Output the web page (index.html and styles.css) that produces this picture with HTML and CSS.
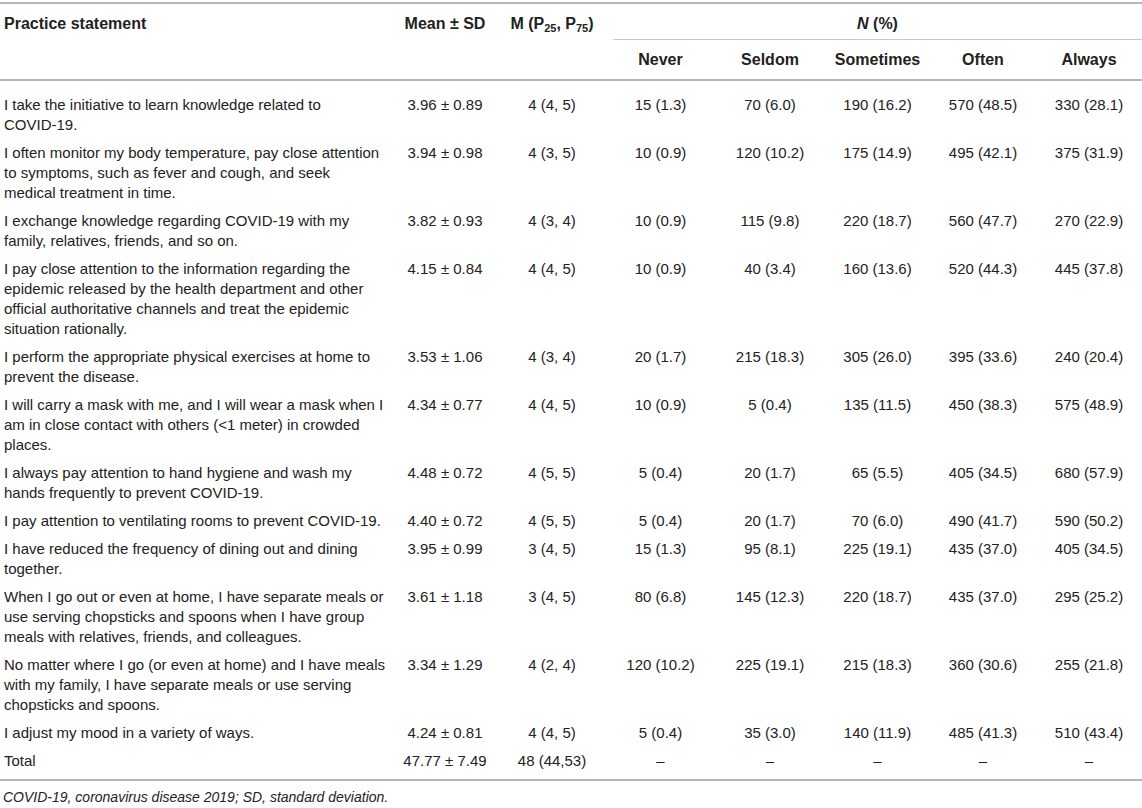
FILE: index.html
```html
<!DOCTYPE html>
<html lang="en">
<head>
<meta charset="utf-8">
<title>Practice statements</title>
<link rel="stylesheet" href="styles.css">
</head>
<body>
<div class="wrap">
<table class="data">
  <colgroup>
    <col class="c-stmt"><col class="c-mean"><col class="c-med"><col class="c-never"><col class="c-seldom"><col class="c-some"><col class="c-often"><col class="c-always">
  </colgroup>
  <thead class="hd">
    <tr class="hd-top">
      <th rowspan="2" class="left">Practice statement</th>
      <th rowspan="2">Mean ± SD</th>
      <th rowspan="2">M (P<sub>25</sub>, P<sub>75</sub>)</th>
      <th colspan="5" class="span-head"><div class="span-inner"><i>N</i> (%)</div></th>
    </tr>
    <tr class="hd-sub">
      <th>Never</th><th>Seldom</th><th>Sometimes</th><th>Often</th><th>Always</th>
    </tr>
  </thead>
  <tbody>
    <tr><td class="left">I take the initiative to learn knowledge related to <span class="nw">COVID-19.</span></td><td>3.96 ± 0.89</td><td>4 (4, 5)</td><td>15 (1.3)</td><td>70 (6.0)</td><td>190 (16.2)</td><td>570 (48.5)</td><td>330 (28.1)</td></tr>
    <tr><td class="left">I often monitor my body temperature, pay close attention to symptoms, such as fever and cough, and seek <span class="nw">medical treatment in time.</span></td><td>3.94 ± 0.98</td><td>4 (3, 5)</td><td>10 (0.9)</td><td>120 (10.2)</td><td>175 (14.9)</td><td>495 (42.1)</td><td>375 (31.9)</td></tr>
    <tr><td class="left">I exchange knowledge regarding COVID-19 with my family, relatives, friends, and so on.</td><td>3.82 ± 0.93</td><td>4 (3, 4)</td><td>10 (0.9)</td><td>115 (9.8)</td><td>220 (18.7)</td><td>560 (47.7)</td><td>270 (22.9)</td></tr>
    <tr><td class="left">I pay close attention to the information regarding the epidemic released by the health department and other official authoritative channels and treat the epidemic situation rationally.</td><td>4.15 ± 0.84</td><td>4 (4, 5)</td><td>10 (0.9)</td><td>40 (3.4)</td><td>160 (13.6)</td><td>520 (44.3)</td><td>445 (37.8)</td></tr>
    <tr><td class="left">I perform the appropriate physical exercises at home to prevent the disease.</td><td>3.53 ± 1.06</td><td>4 (3, 4)</td><td>20 (1.7)</td><td>215 (18.3)</td><td>305 (26.0)</td><td>395 (33.6)</td><td>240 (20.4)</td></tr>
    <tr><td class="left">I will carry a mask with me, and I will wear a mask when I am in close contact with others (&lt;1 meter) in crowded places.</td><td>4.34 ± 0.77</td><td>4 (4, 5)</td><td>10 (0.9)</td><td>5 (0.4)</td><td>135 (11.5)</td><td>450 (38.3)</td><td>575 (48.9)</td></tr>
    <tr><td class="left">I always pay attention to hand hygiene and wash my hands frequently to prevent COVID-19.</td><td>4.48 ± 0.72</td><td>4 (5, 5)</td><td>5 (0.4)</td><td>20 (1.7)</td><td>65 (5.5)</td><td>405 (34.5)</td><td>680 (57.9)</td></tr>
    <tr><td class="left">I pay attention to ventilating rooms to prevent COVID-19.</td><td>4.40 ± 0.72</td><td>4 (5, 5)</td><td>5 (0.4)</td><td>20 (1.7)</td><td>70 (6.0)</td><td>490 (41.7)</td><td>590 (50.2)</td></tr>
    <tr><td class="left">I have reduced the frequency of dining out and dining together.</td><td>3.95 ± 0.99</td><td>3 (4, 5)</td><td>15 (1.3)</td><td>95 (8.1)</td><td>225 (19.1)</td><td>435 (37.0)</td><td>405 (34.5)</td></tr>
    <tr><td class="left">When I go out or even at home, I have separate meals or use serving chopsticks and spoons when I have group meals with relatives, friends, and colleagues.</td><td>3.61 ± 1.18</td><td>3 (4, 5)</td><td>80 (6.8)</td><td>145 (12.3)</td><td>220 (18.7)</td><td>435 (37.0)</td><td>295 (25.2)</td></tr>
    <tr><td class="left">No matter where I go (or even at home) and I have meals with my family, I have separate meals or use serving chopsticks and spoons.</td><td>3.34 ± 1.29</td><td>4 (2, 4)</td><td>120 (10.2)</td><td>225 (19.1)</td><td>215 (18.3)</td><td>360 (30.6)</td><td>255 (21.8)</td></tr>
    <tr><td class="left">I adjust my mood in a variety of ways.</td><td>4.24 ± 0.81</td><td>4 (4, 5)</td><td>5 (0.4)</td><td>35 (3.0)</td><td>140 (11.9)</td><td>485 (41.3)</td><td>510 (43.4)</td></tr>
    <tr class="total"><td class="left">Total</td><td>47.77 ± 7.49</td><td>48 (44,53)</td><td>–</td><td>–</td><td>–</td><td>–</td><td>–</td></tr>
  </tbody>
</table>
<p class="note">COVID-19, coronavirus disease 2019; SD, standard deviation.</p>
</div>
</body>
</html>
```

FILE: styles.css
```css
html, body {
  margin: 0;
  padding: 0;
  background: #ffffff;
}

body {
  font-family: "Liberation Sans", Arial, Helvetica, sans-serif;
  font-size: 15px;
  color: #222222;
}

.wrap {
  padding-top: 2px;
}

.data {
  width: 1142px;
  border-collapse: collapse;
  table-layout: fixed;
  border-top: 2px solid #b5b5b5;
}

.c-stmt { width: 392px; }
.c-mean { width: 106px; }
.c-med { width: 108px; }
.c-never { width: 109px; }
.c-seldom { width: 110px; }
.c-some { width: 105px; }
.c-often { width: 106px; }
.c-always { width: 106px; }

.data th,
.data td {
  line-height: 20px;
  vertical-align: top;
  text-align: center;
  font-weight: normal;
}

.data .left {
  text-align: left;
}

.nw {
  white-space: nowrap;
}

.hd th {
  font-weight: bold;
  font-size: 16px;
  border-bottom: 2px solid #b5b5b5;
}

.hd-top th {
  padding: 10px 4px 0;
}

.hd .span-head {
  border-bottom: 0;
  padding: 10px 0 0 7px;
}

.span-inner {
  padding-bottom: 5px;
  border-bottom: 1px solid #c9c9c9;
}

.hd-sub th {
  padding: 10px 4px 9px;
}

.hd sub {
  font-size: 11px;
  line-height: 0;
  vertical-align: -3px;
}

.data td {
  padding: 4px 4px;
}

.data td.left {
  padding-right: 1px;
}

.data tbody tr:first-child td {
  padding-top: 14px;
}

.data tbody tr.total td {
  padding-bottom: 8px;
  border-bottom: 2px solid #b5b5b5;
}

.note {
  margin: 6px 0 0 3px;
  font-size: 14px;
  line-height: 20px;
  font-style: italic;
  color: #222222;
}
```
